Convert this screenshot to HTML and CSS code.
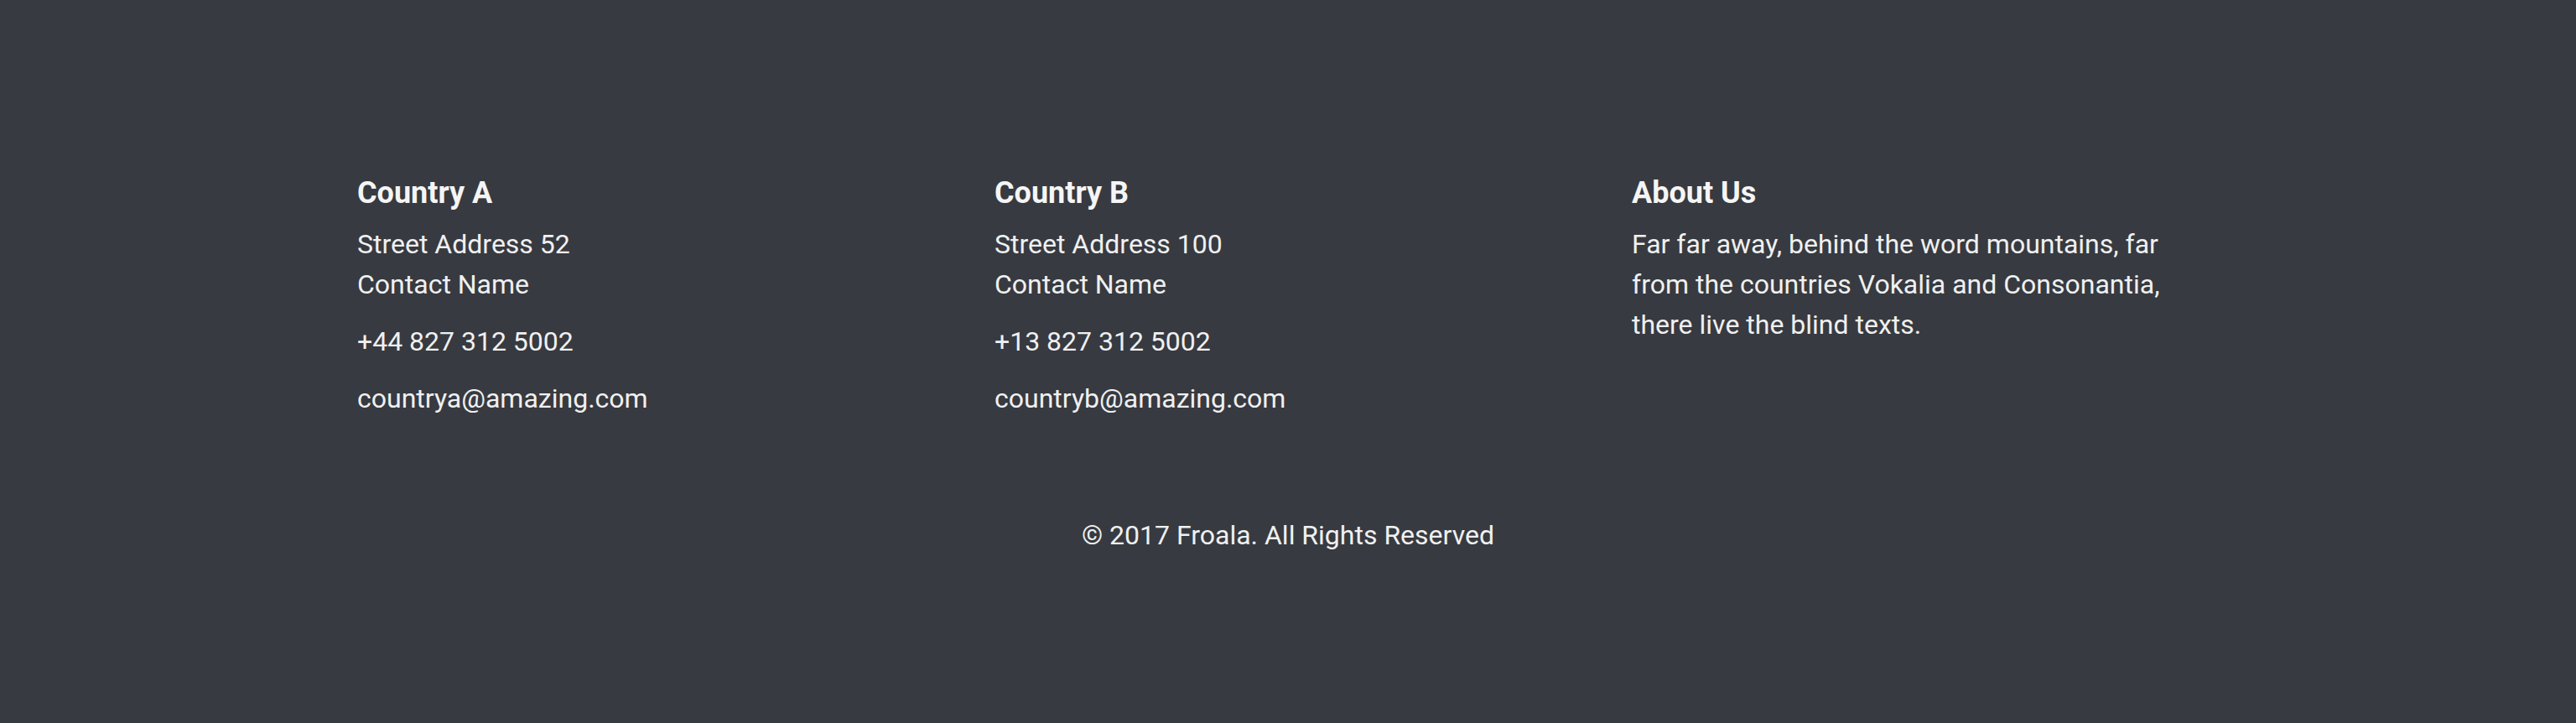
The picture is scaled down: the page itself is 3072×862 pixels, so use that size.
FILE: index.html
```html
<!DOCTYPE html>
<html lang="en">
<head>
<meta charset="utf-8">
<title>Footer</title>
<link rel="stylesheet" href="styles.css">
</head>
<body>
<footer class="footer">
  <div class="container">
    <div class="cols">
      <div class="col">
        <h3 class="title">Country A</h3>
        <p class="text">Street Address 52<br>Contact Name</p>
        <p class="text">+44 827 312 5002</p>
        <p class="text last">countrya@amazing.com</p>
      </div>
      <div class="col">
        <h3 class="title">Country B</h3>
        <p class="text">Street Address 100<br>Contact Name</p>
        <p class="text">+13 827 312 5002</p>
        <p class="text last">countryb@amazing.com</p>
      </div>
      <div class="col">
        <h3 class="title">About Us</h3>
        <p class="text last">Far far away, behind the word mountains, far from the countries Vokalia and Consonantia, there live the blind texts.</p>
      </div>
    </div>
    <div class="copy">
      <p class="text last">© 2017 Froala. All Rights Reserved</p>
    </div>
  </div>
</footer>
</body>
</html>
```

FILE: styles.css
```css
html, body {
  margin: 0;
  padding: 0;
}

body {
  background: #373a40;
  font-family: Roboto, "Liberation Sans", sans-serif;
  color: #f2f2f2;
}

.footer {
  background: #373a40;
  height: 862px;
  box-sizing: border-box;
  padding-top: 209px;
}

.container {
  width: 2220px;
  margin: 0 auto;
}

.cols {
  display: grid;
  grid-template-columns: 700px 700px 700px;
  column-gap: 60px;
}

.title {
  margin: 0 0 15px;
  font-size: 36px;
  line-height: 1.2;
  font-weight: 700;
  color: #f5f5f5;
}

.text {
  margin: 0 0 20px;
  font-size: 32px;
  line-height: 1.5;
  font-weight: 400;
  color: #f0f0f0;
}

.text.last {
  margin-bottom: 0;
}

.copy {
  margin-top: 115px;
  text-align: center;
}
```
